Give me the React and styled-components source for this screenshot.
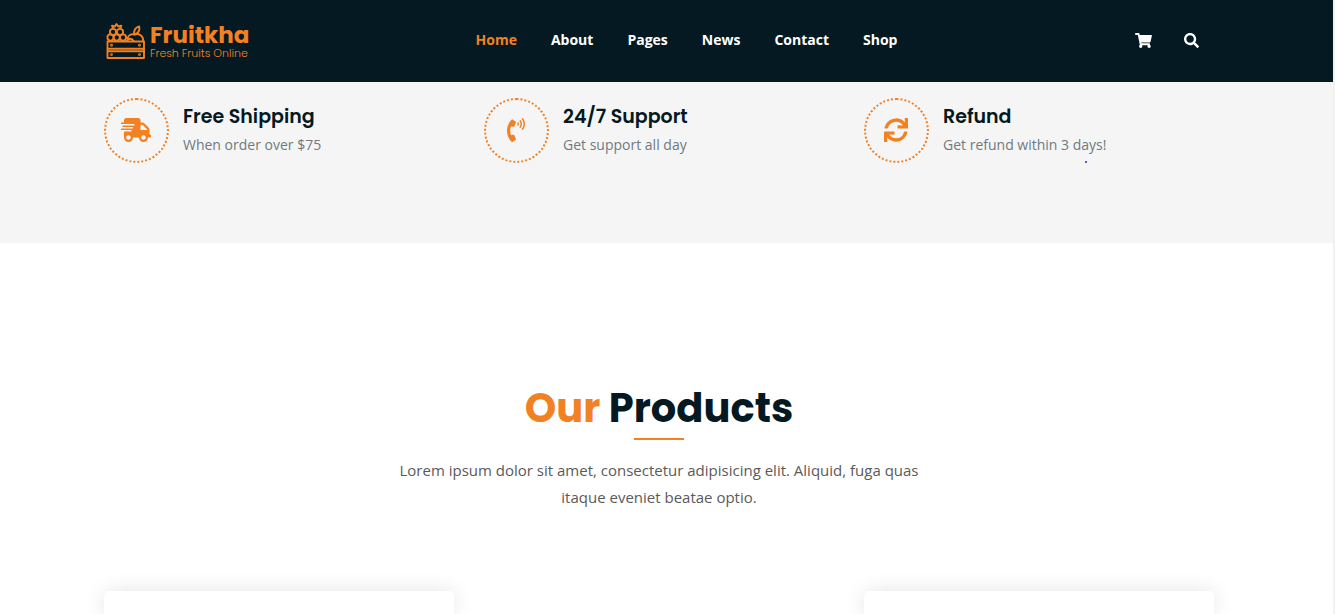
import React from "react";
import styled, { createGlobalStyle } from "styled-components";
import {
  FaPhoneVolume,
  FaSearch,
  FaShippingFast,
  FaShoppingCart,
  FaSync,
} from "react-icons/fa";

const orange = "#f28123";
const navy = "#051922";
const display = `Poppins, Inter, "Liberation Sans", sans-serif`;
const text = `"Open Sans", "Noto Sans", sans-serif`;

const GlobalStyle = createGlobalStyle`
  *, *::before, *::after { box-sizing: border-box; }
  body { margin: 0; background: #fff; font-family: ${text}; }
  h2, h3, p, ul { margin: 0; padding: 0; }
`;

const Page = styled.div`
  min-height: 100vh;
  display: flex;
  flex-direction: column;
  border-right: 2px solid #f1f1f1;
`;

const Band = styled.div`
  padding: 0 15px 0 0;
`;

const Container = styled.div`
  width: 100%;
  max-width: 1110px;
  margin: 0 auto;
`;

const Header = styled(Band).attrs({ as: "header" })`
  background: ${navy};
`;

const HeaderRow = styled(Container)`
  height: 82px;
  padding-bottom: 2px;
  display: flex;
  align-items: center;
  justify-content: space-between;
`;

const Logo = styled.a`
  width: 150px;
  padding: 2px 0 0 2px;
  display: flex;
  align-items: center;
  gap: 5px;
  color: ${orange};
  text-decoration: none;
  font-family: ${display};
`;

const LogoText = styled.span`
  display: flex;
  flex-direction: column;
  white-space: nowrap;
`;

const LogoName = styled.span`
  font-size: 23px;
  line-height: 24px;
  font-weight: 700;
`;

const LogoTag = styled.span`
  font-size: 11px;
  line-height: 12px;
  font-weight: 300;
`;

const Menu = styled.ul`
  display: flex;
  gap: 34px;
  list-style: none;
`;

const MenuLink = styled.a`
  color: ${(p) => (p.$active ? orange : "#fff")};
  font-size: 14px;
  line-height: 24px;
  font-weight: 700;
  text-decoration: none;
`;

const Tools = styled.div`
  display: flex;
  align-items: center;
`;

const ToolLink = styled.a`
  display: flex;
  padding: 0 16px;
  color: #fff;
  svg { height: 15px; width: 17px; display: block; }
`;

const ToolButton = styled.button`
  display: flex;
  padding: 0 15px 0 16px;
  border: 0;
  background: none;
  color: #fff;
  cursor: pointer;
  svg { height: 15px; width: 15px; display: block; }
`;

const Features = styled(Band).attrs({ as: "section" })`
  padding-top: 16px;
  padding-bottom: 80px;
  background: #f5f5f5;
`;

const Columns = styled(Container)`
  display: grid;
  grid-template-columns: repeat(3, 1fr);
  gap: 30px;
`;

const Feature = styled.div`
  position: relative;
  display: flex;
  align-items: center;
  gap: 14px;
`;

const FeatureIcon = styled.span`
  flex: none;
  width: 65px;
  height: 65px;
  padding: 0 1px 1px 0;
  display: flex;
  align-items: center;
  justify-content: center;
  border: 2px dotted ${orange};
  border-radius: 50%;
  color: ${orange};
  svg { height: 24px; width: ${(p) => p.$glyph}px; display: block; }
`;

const FeatureBody = styled.div`
  padding-bottom: 2px;
`;

const FeatureTitle = styled.h3`
  font-family: ${display};
  font-size: 19px;
  line-height: 29px;
  font-weight: 600;
  color: ${navy};
`;

const FeatureText = styled.p`
  font-size: 14px;
  line-height: 27px;
  font-weight: 400;
  color: #6f7a80;
`;

const Dot = styled.span`
  position: absolute;
  left: 221px;
  bottom: 0;
  width: 2px;
  height: 2px;
  border-radius: 1px;
  background: #2a20f0;
`;

const Products = styled(Band).attrs({ as: "section" })`
  flex: 1;
  display: flex;
  flex-direction: column;
  padding-top: 141px;
`;

const Intro = styled.div`
  width: 100%;
  max-width: 550px;
  margin: 0 auto 80px;
  text-align: center;
`;

const Title = styled.h2`
  font-family: ${display};
  font-size: 40px;
  line-height: 48px;
  font-weight: 700;
  color: ${navy};
  span { color: ${orange}; }
  &::after {
    content: "";
    display: block;
    width: 50px;
    height: 2px;
    margin: 6px auto 17px;
    background: ${orange};
  }
`;

const Lead = styled.p`
  font-size: 15px;
  line-height: 27px;
  font-weight: 400;
  color: #5a5a5a;
`;

const CardRow = styled(Columns)`
  flex: 1;
`;

const Card = styled.article`
  border-radius: 5px 5px 0 0;
  background: #fff;
  box-shadow: 0 0 20px #e4e4e4;
  visibility: ${(p) => (p.$loading ? "hidden" : "visible")};
`;

const Crate = () => (
  <svg width="39" height="38" viewBox="0 0 39 38" fill="none" stroke="currentColor" strokeWidth="1.9" strokeLinejoin="round" strokeLinecap="round" aria-hidden="true">
    <rect x="1.500" y="19.500" width="36.500" height="16.500" />
    <path d="M2 26.800h36M2 29.200h36" />
    <circle cx="5.500" cy="23.300" r=".5" />
    <circle cx="33.500" cy="23.300" r=".5" />
    <circle cx="5.500" cy="32.600" r=".5" />
    <circle cx="33.500" cy="32.600" r=".5" />
    <circle cx="7" cy="10" r="3.100" />
    <circle cx="14" cy="10" r="3.100" />
    <circle cx="4.500" cy="15.500" r="3.100" />
    <circle cx="10.700" cy="15.500" r="3.100" />
    <circle cx="17" cy="15.500" r="3.100" />
    <path d="M7.300 6.500L6 3.800l3 .7L10.500 2l1.800 2.500 3-.7-1.200 2.700" />
    <path d="M21.500 16.500c.8-3.600 4-5.200 7-3.800c3.800-1.800 8.800.6 8.800 6.500M21 19c1.500-3 5-3 6.500 0M28.500 12.700c-1.300-4 1-7.500 4.700-8.200c.8 3.200-.7 6.500-4.700 8.200z" />
  </svg>
);

const links = ["Home", "About", "Pages", "News", "Contact", "Shop"];

const features = [
  { icon: FaShippingFast, glyph: 30, title: "Free Shipping", body: "When order over $75" },
  { icon: FaPhoneVolume, glyph: 18, title: "24/7 Support", body: "Get support all day" },
  { icon: FaSync, glyph: 24, title: "Refund", body: "Get refund within 3 days!", dot: true },
];

export default function App() {
  return (
    <Page>
      <GlobalStyle />
      <Header>
        <HeaderRow>
          <Logo href="#">
            <Crate />
            <LogoText>
              <LogoName>Fruitkha</LogoName>
              <LogoTag>Fresh Fruits Online</LogoTag>
            </LogoText>
          </Logo>
          <nav>
            <Menu>
              {links.map((name, i) => (
                <li key={name}>
                  <MenuLink href="#" $active={i === 0}>{name}</MenuLink>
                </li>
              ))}
            </Menu>
          </nav>
          <Tools>
            <ToolLink href="#" aria-label="Cart"><FaShoppingCart /></ToolLink>
            <ToolButton type="button" aria-label="Search"><FaSearch /></ToolButton>
          </Tools>
        </HeaderRow>
      </Header>
      <Features>
        <Columns>
          {features.map(({ icon: Icon, glyph, title, body, dot }) => (
            <Feature key={title}>
              <FeatureIcon $glyph={glyph}><Icon /></FeatureIcon>
              <FeatureBody>
                <FeatureTitle>{title}</FeatureTitle>
                <FeatureText>{body}</FeatureText>
              </FeatureBody>
              {dot && <Dot />}
            </Feature>
          ))}
        </Columns>
      </Features>
      <Products>
        <Intro>
          <Title><span>Our</span> Products</Title>
          <Lead>
            Lorem ipsum dolor sit amet, consectetur adipisicing elit. Aliquid,
            fuga quas itaque eveniet beatae optio.
          </Lead>
        </Intro>
        <CardRow>
          <Card />
          <Card $loading />
          <Card />
        </CardRow>
      </Products>
    </Page>
  );
}
